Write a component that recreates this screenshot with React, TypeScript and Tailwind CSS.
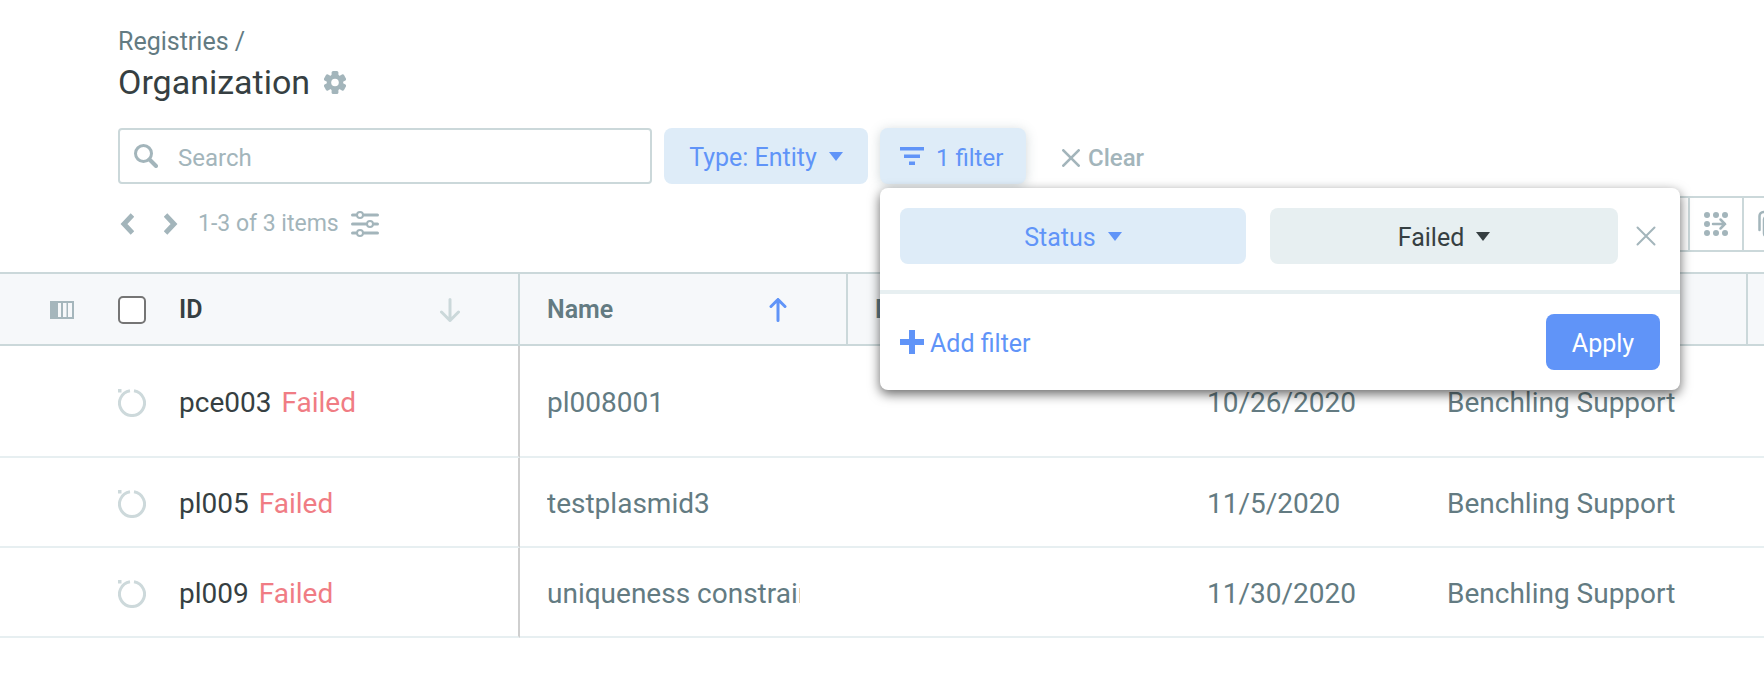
import type { ReactNode } from 'react';

const rows = [
  { id: 'pce003', status: 'Failed', name: 'pl008001', date: '10/26/2020', author: 'Benchling Support', height: 'h-28' },
  { id: 'pl005', status: 'Failed', name: 'testplasmid3', date: '11/5/2020', author: 'Benchling Support', height: 'h-[90px]' },
  { id: 'pl009', status: 'Failed', name: 'uniqueness constraint', date: '11/30/2020', author: 'Benchling Support', height: 'h-[90px]' },
];

const Caret = () => (
  <svg width="14" height="9" viewBox="0 0 14 9" fill="currentColor" aria-hidden="true">
    <path d="M0 0h14L7 9z" />
  </svg>
);

const GearIcon = () => (
  <svg width="22" height="23" viewBox="0 0 22 23" fill="currentColor" aria-hidden="true">
    <circle cx="11" cy="11.5" r="8.2" />
    <rect x="7.6" y="0" width="6.800" height="23" rx="1.500" />
    <rect x="7.600" y="0" width="6.800" height="23" rx="1.500" transform="rotate(60 11 11.5)" />
    <rect x="7.600" y="0" width="6.800" height="23" rx="1.500" transform="rotate(120 11 11.5)" />
    <circle cx="11" cy="11.500" r="3.800" fill="#fff" />
  </svg>
);

const SearchIcon = () => (
  <svg width="24" height="24" viewBox="0 0 24 24" fill="none" stroke="currentColor" className="shrink-0" aria-hidden="true">
    <circle cx="9.500" cy="9.500" r="8" strokeWidth="3" />
    <path d="M15.500 15.500l6.500 6.500" strokeWidth="4" strokeLinecap="round" />
  </svg>
);

const SlidersIcon = () => (
  <svg width="28" height="26" viewBox="0 0 28 26" fill="none" stroke="currentColor" aria-hidden="true">
    <path d="M1.500 4H5M13 4h13.500M1.500 13H15M23 13h3.500M1.500 22H5M13 22h13.500" strokeWidth="3" strokeLinecap="round" />
    <circle cx="9" cy="4" r="3" strokeWidth="2" />
    <circle cx="19" cy="13" r="3" strokeWidth="2" />
    <circle cx="9" cy="22" r="3" strokeWidth="2" />
  </svg>
);

const ChevronIcon = ({ d }: { d: string }) => (
  <svg width="14" height="22" viewBox="0 0 14 22" fill="none" stroke="currentColor" strokeWidth="5" aria-hidden="true">
    <path d={d} />
  </svg>
);

const CloseIcon = ({ size, stroke }: { size: number; stroke: number }) => (
  <svg width={size} height={size} viewBox="0 0 20 20" fill="none" stroke="currentColor" strokeWidth={stroke} strokeLinecap="round" aria-hidden="true">
    <path d="M1.500 1.500l17 17M18.500 1.500l-17 17" />
  </svg>
);

const FilterIcon = () => (
  <svg width="24" height="18" viewBox="0 0 24 18" fill="currentColor" aria-hidden="true">
    <path d="M0 0h24v3.500H0zM4 7.500h16V11H4zM9 14.500h6V18H9z" />
  </svg>
);

const ColumnsIcon = () => (
  <svg width="24" height="18" viewBox="0 0 24 18" aria-hidden="true">
    <path fill="#a5b6bc" d="M0 0h24v18H0z" />
    <path fill="#f6f8fa" d="M8 2h3v14H8zM13 2h3.500v14H13zM18 2h4v14h-4z" />
  </svg>
);

const GridArrowIcon = () => (
  <svg width="24" height="24" viewBox="0 0 24 24" fill="currentColor" aria-hidden="true">
    <circle cx="3" cy="3" r="3" />
    <circle cx="12" cy="3" r="3" />
    <circle cx="21" cy="3" r="3" />
    <circle cx="3" cy="12" r="3" />
    <circle cx="3" cy="21" r="3" />
    <circle cx="12" cy="21" r="3" />
    <circle cx="21" cy="21" r="3" />
    <path d="M9 12h12M16.500 7.500L21 12l-4.500 4.500" fill="none" stroke="currentColor" strokeWidth="2.500" strokeLinecap="round" />
  </svg>
);

const CopyIcon = () => (
  <svg width="24" height="28" viewBox="0 0 24 28" fill="none" stroke="currentColor" strokeWidth="2.500" aria-hidden="true">
    <path d="M1.500 20V6a4 4 0 0 1 4-4H16" strokeLinecap="round" />
    <rect x="6" y="6.500" width="16" height="20" rx="3" />
  </svg>
);

const RowStatusIcon = () => (
  <svg width="28" height="28" viewBox="0 0 28 28" fill="none" stroke="#cdd9db" aria-hidden="true">
    <path d="M16 1.700A12.500 12.500 0 1 1 12 1.700" strokeWidth="3" />
    <path d="M0 0h3.500v3.500H0z" fill="#cdd9db" stroke="none" />
  </svg>
);

const SelectPill = ({ label, value, className }: { label: string; value: string; className: string }) => (
  <label className={`flex h-14 items-center justify-center gap-3 rounded-lg ${className}`}>
    <select aria-label={label} defaultValue={value} className="field-sizing-content appearance-none bg-transparent pt-[3px] leading-8 outline-none">
      <option>{value}</option>
    </select>
    <Caret />
  </label>
);

const ToolButton = ({ label, children }: { label: string; children?: ReactNode }) => (
  <button type="button" aria-label={label} className="flex w-[54px] items-center justify-center border-r-2 border-[#cbd8da]">
    {children}
  </button>
);

const FilterPopover = () => (
  <div className="absolute top-[60px] left-0 z-10 w-[800px] rounded-lg bg-white shadow-[0_4px_12px_rgba(0,0,0,0.6)]">
    <div className="flex items-center px-5 pt-5 pb-[26px]">
      <SelectPill label="Field" value="Status" className="w-[346px] bg-[#deecf8] text-[#6094f8]" />
      <SelectPill label="Value" value="Failed" className="ml-6 w-[348px] bg-[#e7eff1] text-[#363f42]" />
      <button type="button" aria-label="Remove filter" className="ml-[18px] text-[#a3b5bb]">
        <CloseIcon size={20} stroke={2} />
      </button>
    </div>
    <div className="flex items-center justify-between border-t-4 border-[#e7eff1] p-5">
      <button type="button" className="flex items-center gap-1.5 text-[#6094f8]">
        <svg width="24" height="24" viewBox="0 0 24 24" fill="currentColor" aria-hidden="true">
          <path d="M9 0h6v9h9v6h-9v9H9v-9H0V9h9z" />
        </svg>
        <span className="pt-[3px]">Add filter</span>
      </button>
      <button type="button" className="h-14 w-[114px] rounded-lg bg-[#6094f8] pt-[3px] text-white">
        Apply
      </button>
    </div>
  </div>
);

const Header = () => (
  <header className="pl-[118px]">
    <div className="pt-7 leading-7 text-[#637b82]">
      <a href="#registries">Registries</a> /
    </div>
    <div className="flex h-12 items-center gap-3.5 pt-[3px]">
      <h1 className="text-[34px] leading-10 text-[#363f42]">Organization</h1>
      <button type="button" aria-label="Settings" className="pt-0.5 text-[#a3b5bb]">
        <GearIcon />
      </button>
    </div>
    <div className="mt-6 flex gap-3">
      <label className="flex h-14 w-[534px] items-center gap-5 rounded border-2 border-[#cbd8da] px-3.5 text-[#a3b5bb]">
        <SearchIcon />
        <input type="search" aria-label="Search" placeholder="Search" className="w-full pt-[3px] text-2xl outline-none placeholder:text-[#a3b5bb]" />
      </label>
      <SelectPill label="Type" value="Type: Entity" className="w-[204px] bg-[#deecf8] text-[#6094f8]" />
      <div className="relative">
        <button type="button" className="flex h-14 w-[146px] items-center gap-3 rounded-lg bg-[#deecf8] pl-5 text-2xl text-[#6094f8] shadow-[0_2px_12px_rgba(99,123,130,0.3)]">
          <FilterIcon />
          <span className="pt-[3px]">1 filter</span>
        </button>
        <FilterPopover />
      </div>
      <button type="button" className="ml-6 flex items-center gap-2 pt-[3px] text-2xl font-medium text-[#a3b5bb]">
        <CloseIcon size={18} stroke={3} />
        Clear
      </button>
    </div>
    <div className="mt-3 flex h-14 items-center text-[#a3b5bb]">
      <button type="button" aria-label="Previous page" className="pl-0.5">
        <ChevronIcon d="M12.500 2L4 11l8.500 9" />
      </button>
      <button type="button" aria-label="Next page" className="ml-[30px]">
        <ChevronIcon d="M1.500 2L10 11l-8.500 9" />
      </button>
      <span className="ml-5 text-[23px]">1-3 of 3 items</span>
      <button type="button" aria-label="Table settings" className="ml-3">
        <SlidersIcon />
      </button>
      <div className="-mr-[34px] ml-auto flex h-14 border-y-2 border-l-2 border-[#cbd8da]">
        <ToolButton label="More" />
        <ToolButton label="Move">
          <GridArrowIcon />
        </ToolButton>
        <ToolButton label="Copy">
          <CopyIcon />
        </ToolButton>
      </div>
    </div>
  </header>
);

const ItemsTable = () => (
  <table className="mt-5 w-full table-fixed border-separate border-spacing-0 text-left text-[28px] text-[#637b82]">
    <colgroup>
      <col className="w-[118px]" />
      <col className="w-[61px]" />
      <col className="w-[341px]" />
      <col className="w-[328px]" />
      <col className="w-[332px]" />
      <col className="w-60" />
      <col className="w-[328px]" />
      <col />
    </colgroup>
    <thead className="bg-[#f6f8fa] text-[25px]">
      <tr className="h-[74px] *:border-y-2 *:border-y-[#cbd8da] *:border-r-[#cbd8da] *:pt-0.5 *:font-semibold">
        <th className="pl-[50px]">
          <button type="button" aria-label="Columns" className="block">
            <ColumnsIcon />
          </button>
        </th>
        <th>
          <input type="checkbox" aria-label="Select all" className="block size-7 appearance-none rounded-[5px] border-2 border-[#757575] bg-white" />
        </th>
        <th className="border-r-2 pr-[58px] text-[#363f42]">
          <div className="flex items-center justify-between">
            ID
            <svg width="20" height="24" viewBox="0 0 20 24" fill="none" stroke="#cbd8da" strokeWidth="3" strokeLinecap="round" aria-hidden="true">
              <path d="M10 1.500v21M1.500 14l8.500 8.500 8.500-8.500" />
            </svg>
          </div>
        </th>
        <th className="border-r-2 pr-[59px] pl-[27px]">
          <div className="flex items-center justify-between">
            Name
            <svg width="18" height="24" viewBox="0 0 18 24" fill="none" stroke="#6094f8" strokeWidth="3" strokeLinecap="round" aria-hidden="true">
              <path d="M9 22.500v-21M2 8.500l7-7 7 7" />
            </svg>
          </div>
        </th>
        <th className="border-r-2 pl-[27px]">Description</th>
        <th className="border-r-2 pl-[27px]">Created</th>
        <th className="border-r-2 pl-[27px]">Author</th>
        <th />
      </tr>
    </thead>
    <tbody>
      {rows.map((row) => (
        <tr key={row.id} className={`${row.height} *:overflow-hidden *:border-b-2 *:border-b-[#e7eff1] *:pt-1 *:whitespace-nowrap`}>
          <td />
          <td>
            <RowStatusIcon />
          </td>
          <td className="border-r-2 border-r-[#cfcfcf]">
            <a href={`#${row.id}`} className="text-[#363f42]">
              {row.id}
            </a>
            <span className="ml-2.5 text-[#f07c84]">{row.status}</span>
          </td>
          <td className="pr-12 pl-[27px]">
            <div className="overflow-hidden">{row.name}</div>
          </td>
          <td />
          <td className="pl-[27px]">{row.date}</td>
          <td className="pl-[27px]">{row.author}</td>
          <td />
        </tr>
      ))}
    </tbody>
  </table>
);

const App = () => {
  return (
    <main className="min-h-screen overflow-x-hidden bg-white font-['Roboto',sans-serif] text-[25px]">
      <Header />
      <ItemsTable />
    </main>
  );
};

export default App;
